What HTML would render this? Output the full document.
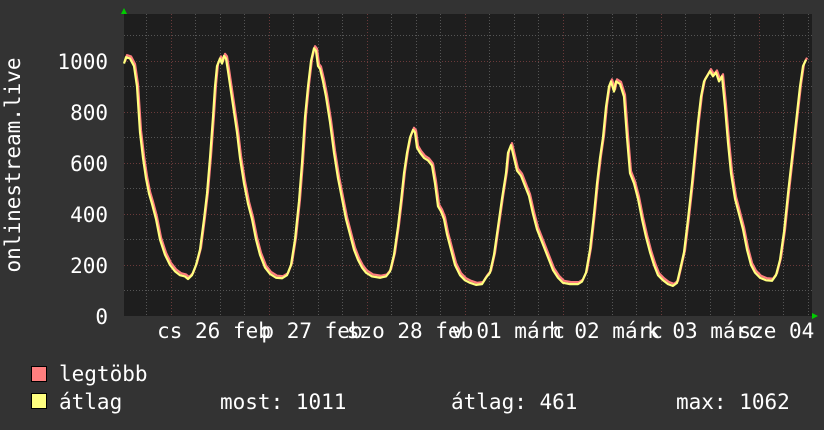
<!DOCTYPE html>
<html><head><meta charset="utf-8"><style>
html,body{margin:0;padding:0;background:#333333;}
svg{display:block}
text{font-family:"DejaVu Sans Mono","Liberation Mono",monospace;font-size:21px;fill:#ffffff}
</style></head><body>
<svg width="824" height="430" viewBox="0 0 824 430" xmlns="http://www.w3.org/2000/svg">
<defs>
<polyline id="c" fill="none" stroke-linejoin="round" vector-effect="non-scaling-stroke" points="124,990 126,1015 130,1010 134,980 137,900 140,720 143,620 146,540 149,480 152,440 156,380 160,300 165,240 170,200 175,175 180,160 185,155 188,145 192,160 196,200 200,260 204,380 207,480 210,620 213,780 215,900 217,980 220,1010 222,990 224,1020 226,1010 228,960 231,880 234,800 237,720 240,620 244,520 248,440 252,380 256,300 260,240 265,190 270,165 276,150 282,148 287,160 291,200 295,300 299,450 302,600 305,780 308,900 311,1000 314,1050 316,1040 318,980 320,970 323,920 326,860 330,760 334,640 338,540 342,460 346,380 350,320 354,260 358,220 362,190 366,170 372,155 380,150 386,155 390,175 394,240 398,350 401,450 404,560 407,640 410,700 413,730 415,720 417,660 420,640 424,620 428,610 432,590 435,520 438,430 441,410 444,380 447,320 451,260 455,200 460,160 465,140 470,130 476,122 482,125 486,150 490,170 494,240 498,350 502,460 506,560 508,640 511,670 514,620 517,570 521,550 525,510 529,470 533,400 537,340 541,300 545,260 549,220 553,180 558,150 563,130 570,125 578,125 582,135 586,170 590,260 594,400 597,520 600,620 603,700 606,820 609,900 611,920 614,880 616,920 620,910 624,860 627,700 630,560 634,520 638,460 642,380 646,310 650,250 654,200 658,160 663,140 668,125 673,118 677,130 680,180 684,250 688,380 692,520 695,640 698,760 701,860 704,920 707,940 710,960 713,940 716,955 719,920 722,940 725,820 728,680 731,560 735,460 739,400 743,340 747,260 751,200 755,170 760,150 766,140 772,138 776,160 780,220 784,330 788,480 792,620 796,760 800,900 803,980 806,1005"/>
</defs>
<rect width="824" height="430" fill="#333333"/>
<rect x="124" y="14" width="688" height="302" fill="#1e1e1e"/>
<g stroke="#555" stroke-width="1" stroke-dasharray="1,2">
<line x1="124" x2="812" y1="290.5" y2="290.5"/><line x1="124" x2="812" y1="239.5" y2="239.5"/><line x1="124" x2="812" y1="188.5" y2="188.5"/><line x1="124" x2="812" y1="137.5" y2="137.5"/><line x1="124" x2="812" y1="86.5" y2="86.5"/><line x1="124" x2="812" y1="35.5" y2="35.5"/>
<line y1="14" y2="316" x1="146.5" x2="146.5"/><line y1="14" y2="316" x1="195.5" x2="195.5"/><line y1="14" y2="316" x1="220.5" x2="220.5"/><line y1="14" y2="316" x1="244.5" x2="244.5"/>
<line y1="14" y2="316" x1="293.5" x2="293.5"/><line y1="14" y2="316" x1="318.5" x2="318.5"/><line y1="14" y2="316" x1="342.5" x2="342.5"/>
<line y1="14" y2="316" x1="391.5" x2="391.5"/><line y1="14" y2="316" x1="416.5" x2="416.5"/><line y1="14" y2="316" x1="440.5" x2="440.5"/>
<line y1="14" y2="316" x1="489.5" x2="489.5"/><line y1="14" y2="316" x1="514.5" x2="514.5"/><line y1="14" y2="316" x1="538.5" x2="538.5"/>
<line y1="14" y2="316" x1="587.5" x2="587.5"/><line y1="14" y2="316" x1="612.5" x2="612.5"/><line y1="14" y2="316" x1="636.5" x2="636.5"/>
<line y1="14" y2="316" x1="685.5" x2="685.5"/><line y1="14" y2="316" x1="710.5" x2="710.5"/><line y1="14" y2="316" x1="734.5" x2="734.5"/>
<line y1="14" y2="316" x1="783.5" x2="783.5"/><line y1="14" y2="316" x1="808.5" x2="808.5"/>
</g>
<g stroke="#6a3a3a" stroke-width="1" stroke-dasharray="1,2">
<line x1="124" x2="812" y1="265.5" y2="265.5"/><line x1="124" x2="812" y1="214.5" y2="214.5"/><line x1="124" x2="812" y1="163.5" y2="163.5"/><line x1="124" x2="812" y1="112.5" y2="112.5"/><line x1="124" x2="812" y1="61.5" y2="61.5"/>
<line y1="14" y2="316" x1="171.5" x2="171.5"/><line y1="14" y2="316" x1="269.5" x2="269.5"/><line y1="14" y2="316" x1="367.5" x2="367.5"/><line y1="14" y2="316" x1="465.5" x2="465.5"/><line y1="14" y2="316" x1="563.5" x2="563.5"/><line y1="14" y2="316" x1="661.5" x2="661.5"/><line y1="14" y2="316" x1="759.5" x2="759.5"/>
</g>
<g transform="translate(0,316) scale(1,-0.255)">
<use href="#c" transform="translate(1,8)" stroke="#ff7f7f" stroke-width="2.2"/>
<use href="#c" stroke="#ffff7f" stroke-width="2.2"/>
</g>
<polygon points="121,14 127,14 124,8" fill="#00cc00"/>
<polygon points="812,313 812,319 818,316" fill="#00cc00"/>
<g text-anchor="end">
<text x="108" y="69">1000</text><text x="108" y="120">800</text><text x="108" y="171">600</text><text x="108" y="222">400</text><text x="108" y="273">200</text><text x="108" y="324">0</text>
</g>
<text transform="translate(20,165) rotate(-90)" text-anchor="middle">onlinestream.live</text>
<g text-anchor="middle">
<text x="214" y="338">cs 26 feb</text><text x="312" y="338">p 27 feb</text><text x="410" y="338">szo 28 feb</text><text x="508" y="338">v 01 márc</text><text x="606" y="338">h 02 márc</text><text x="704" y="338">k 03 márc</text><text x="808" y="338">sze 04 márc</text>
</g>
<rect x="31.5" y="366.5" width="15" height="15" fill="#ff7f7f" stroke="#000"/>
<rect x="31.5" y="393.5" width="15" height="15" fill="#ffff7f" stroke="#000"/>
<text x="59" y="381">legtöbb</text>
<text x="59" y="409">átlag</text>
<text x="220" y="409">most: 1011</text>
<text x="451" y="409">átlag: 461</text>
<text x="676" y="409">max: 1062</text>
</svg>
</body></html>
